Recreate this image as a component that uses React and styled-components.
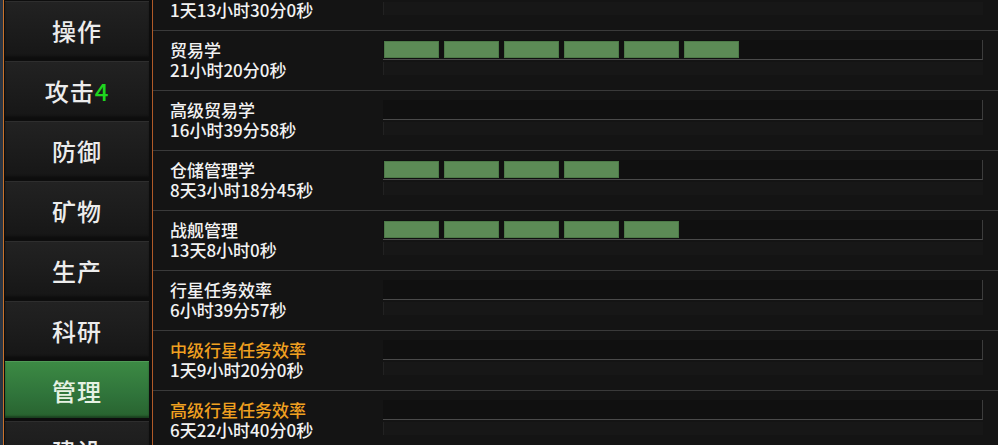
import React from 'react';
import styled, { createGlobalStyle } from 'styled-components';

const GlobalStyle = createGlobalStyle`
  html, body {
    margin: 0;
    padding: 0;
    background: #2b3542;
    font-family: "Noto Sans CJK SC", "Noto Sans", sans-serif;
  }
`

const Screen = styled.div`
  display: flex;
  width: 998px;
  height: 445px;
  overflow: hidden;
  padding-left: 3px;
  box-sizing: border-box;
`

const Sidebar = styled.div`
  width: 150px;
  flex-shrink: 0;
  display: flex;
  flex-direction: column;
  gap: 3px;
  padding: 1px 3px 0 1px;
  box-sizing: border-box;
  background: #0d0d0d;
  border-left: 1px solid #c8722c;
  border-right: 1px solid #b05a28;
`

const NavButton = styled.div`
  height: 57px;
  flex-shrink: 0;
  display: flex;
  align-items: center;
  justify-content: center;
  font-size: 24px;
  font-weight: 500;
  letter-spacing: 1px;
  color: ${props => props.active ? '#e6f2e4' : '#ececec'};
  background: ${props => props.active
    ? 'linear-gradient(#3c8a44, #2f733a 60%, #28622f)'
    : 'linear-gradient(#222222, #1b1b1b 60%, #161616)'};
  border-top: 1px solid ${props => props.active ? '#4f9a56' : '#2e2e2e'};
  box-shadow: inset 0 -2px 2px rgba(0,0,0,.35);
  box-sizing: border-box;
`

const Count = styled.span`
  color: #1fd61f;
`

const Main = styled.div`
  flex: 1;
  background: #141414;
  overflow: hidden;
`

const List = styled.div`
  margin-top: -29px;
`

const Row = styled.div`
  display: grid;
  grid-template-columns: 213px 1fr;
  height: 60px;
  padding: 0 15px 0 17px;
  box-sizing: border-box;
  border-bottom: 1px solid #3a3a3a;
`

const Info = styled.div`
  padding-top: 9px;
  font-size: 17px;
  font-weight: 500;
  line-height: 20px;
  color: #f2f2f2;
  white-space: nowrap;
`

const Name = styled.div`
  color: ${props => props.highlight ? '#f0a020' : '#f2f2f2'};
`

const Bars = styled.div`
  padding-top: 9px;
  display: flex;
  flex-direction: column;
  gap: 2px;
`

const Track = styled.div`
  height: 20px;
  display: flex;
  gap: 5px;
  padding: 1px 0 0 1px;
  box-sizing: border-box;
  background: #101010;
  border-bottom: 1px solid #4a4a4a;
  border-right: 1px solid #3c3c3c;
`

const Cell = styled.div`
  width: 55px;
  height: 17px;
  background: #5c8b56;
  border: 1px solid #4d7a48;
  box-sizing: border-box;
`

const SubTrack = styled.div`
  height: 13px;
  background: #171717;
  border-left: 1px solid #222222;
`

const navItems = [
  { label: '操作' },
  { label: '攻击', count: 4 },
  { label: '防御' },
  { label: '矿物' },
  { label: '生产' },
  { label: '科研' },
  { label: '管理', active: true },
  { label: '建设' },
]

const skills = [
  { name: '初级贸易学', time: '1天13小时30分0秒', level: 0 },
  { name: '贸易学', time: '21小时20分0秒', level: 6 },
  { name: '高级贸易学', time: '16小时39分58秒', level: 0 },
  { name: '仓储管理学', time: '8天3小时18分45秒', level: 4 },
  { name: '战舰管理', time: '13天8小时0秒', level: 5 },
  { name: '行星任务效率', time: '6小时39分57秒', level: 0 },
  { name: '中级行星任务效率', time: '1天9小时20分0秒', level: 0, highlight: true },
  { name: '高级行星任务效率', time: '6天22小时40分0秒', level: 0, highlight: true },
]

export default function App() {
  return (
    <>
      <GlobalStyle />
      <Screen>
        <Sidebar>
          {navItems.map(item => (
            <NavButton key={item.label} active={item.active}>
              {item.label}
              {item.count != null && <Count>{item.count}</Count>}
            </NavButton>
          ))}
        </Sidebar>
        <Main>
          <List>
            {skills.map(s => (
              <Row key={s.name}>
                <Info>
                  <Name highlight={s.highlight}>{s.name}</Name>
                  <div>{s.time}</div>
                </Info>
                <Bars>
                  <Track>
                    {Array.from({ length: s.level }).map((_, i) => <Cell key={i} />)}
                  </Track>
                  <SubTrack />
                </Bars>
              </Row>
            ))}
          </List>
        </Main>
      </Screen>
    </>
  );
}
